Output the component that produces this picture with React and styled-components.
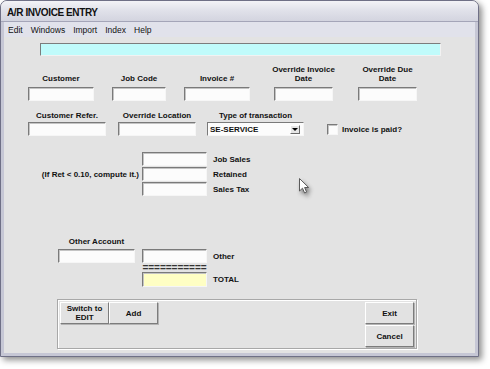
import React from "react";
import styled, { createGlobalStyle } from "styled-components";

const GlobalStyle = createGlobalStyle`
  html, body {
    margin: 0;
    padding: 0;
    background: #ffffff;
  }
  body {
    font-family: "Liberation Sans", Arial, sans-serif;
  }
`;

const Page = styled.div`
  width: 490px;
  height: 369px;
  overflow: hidden;
`;

const Window = styled.div`
  width: 479px;
  height: 357px;
  box-sizing: border-box;
  border: 1px solid #6f7086;
  border-radius: 7px 7px 0 0;
  box-shadow: 3px 3px 6px rgba(0, 0, 0, 0.45);
  display: flex;
  flex-direction: column;
  background: #e3e3e3;
  overflow: hidden;
`;

const TitleBar = styled.div`
  height: 21px;
  border-bottom: 1px solid #a4a5b8;
  background: linear-gradient(#f3f3f7 0%, #e1e2ea 45%, #d3d4df 100%);
  display: flex;
  align-items: center;
  padding: 2px 0 0 6px;
  box-sizing: border-box;
  font-size: 10px;
  font-weight: bold;
  letter-spacing: -0.4px;
  color: #111;
`;

const MenuBar = styled.div`
  height: 15px;
  background: #e1e2eb;
  border-left: 3px solid #c6c7d5;
  border-right: 3px solid #c6c7d5;
  display: flex;
  align-items: center;
  gap: 8px;
  padding-left: 4px;
  font-size: 8.5px;
  color: #111;
`;

const Body = styled.div`
  flex: 1;
  position: relative;
  border: 3px solid #c6c7d5;
  border-top: none;
  background: #e3e3e3;
`;

const CyanBar = styled.div`
  margin: 6px 0 0 36px;
  width: 401px;
  height: 13px;
  box-sizing: border-box;
  background: #c0fbfb;
  border: 1px solid;
  border-color: #7c7c7c #f2f2f2 #f2f2f2 #7c7c7c;
`;

const FieldRow = styled.div`
  display: flex;
  align-items: flex-end;
  margin-top: ${(p) => p.$top}px;
  padding-left: 24px;
`;

const Field = styled.div`
  width: ${(p) => p.$w}px;
  display: flex;
  flex-direction: column;
  align-items: center;
  gap: ${(p) => p.$gap || 4}px;
  margin-left: ${(p) => p.$left || 0}px;
`;

const Label = styled.div`
  font-size: 8px;
  font-weight: bold;
  line-height: 9px;
  color: #111;
  text-align: center;
  white-space: nowrap;
`;

const TextBox = styled.div`
  width: ${(p) => p.$w}px;
  height: ${(p) => p.$h || 14}px;
  flex-shrink: 0;
  box-sizing: border-box;
  background: ${(p) => (p.$yellow ? "#ffffc4" : "#fcfcfc")};
  border: 1px solid;
  border-color: #7a7a7a #f6f6f6 #f6f6f6 #7a7a7a;
  box-shadow: inset 1px 1px 0 #c4c4c4;
`;

const Select = styled.div`
  width: 97px;
  height: 14px;
  box-sizing: border-box;
  background: #fcfcfc;
  border: 1px solid;
  border-color: #7a7a7a #f6f6f6 #f6f6f6 #7a7a7a;
  display: flex;
  align-items: center;
  justify-content: space-between;
  padding: 0 3px 0 2px;
  font-size: 8px;
  font-weight: bold;
  color: #111;
`;

const DropButton = styled.div`
  width: 10px;
  height: 9px;
  box-sizing: border-box;
  background: #e6e6e6;
  border: 1px solid;
  border-color: #ffffff #6a6a6a #6a6a6a #ffffff;
  display: flex;
  align-items: center;
  justify-content: center;

  &::after {
    content: "";
    border-left: 3px solid transparent;
    border-right: 3px solid transparent;
    border-top: 3px solid #000;
  }
`;

const CheckGroup = styled.div`
  height: 14px;
  margin-left: 23px;
  display: flex;
  align-items: center;
  gap: 4px;
`;

const CheckBox = styled.div`
  width: 11px;
  height: 11px;
  box-sizing: border-box;
  background: #fcfcfc;
  border: 1px solid;
  border-color: #7a7a7a #f6f6f6 #f6f6f6 #7a7a7a;
  box-shadow: inset 1px 1px 0 #c4c4c4;
`;

const AmountGrid = styled.div`
  display: grid;
  grid-template-columns: 135px 65px auto;
  grid-template-rows: ${(p) => p.$rows};
  column-gap: 3px;
  row-gap: ${(p) => p.$rowGap || 0}px;
  margin-top: ${(p) => p.$top}px;
  align-items: center;
`;

const Note = styled(Label)`
  grid-column: 1;
  grid-row: ${(p) => p.$row};
  justify-self: end;
`;

const SideLabel = styled(Label)`
  grid-column: 3;
  grid-row: ${(p) => p.$row};
  padding-left: 3px;
  text-align: left;
`;

const Cell = styled.div`
  grid-column: ${(p) => p.$col};
  grid-row: ${(p) => p.$row};
  justify-self: ${(p) => p.$justify || "stretch"};
  margin-right: ${(p) => p.$right || 0}px;
  align-self: ${(p) => p.$align || "stretch"};
`;

const Equals = styled.div`
  font-size: 10px;
  font-weight: bold;
  line-height: 9px;
  color: #333;
  text-align: center;
  overflow: hidden;
  white-space: nowrap;
`;

const Panel = styled.div`
  margin: 12px 0 0 53px;
  width: 360px;
  height: 50px;
  box-sizing: border-box;
  border: 1px solid #a8a8a8;
  box-shadow: 1px 1px 0 #ffffff, inset 1px 1px 0 #ffffff;
  padding: 2px;
  display: flex;
  justify-content: space-between;
  align-items: flex-start;
`;

const ButtonGroup = styled.div`
  display: flex;
  flex-direction: ${(p) => (p.$column ? "column" : "row")};
  gap: ${(p) => (p.$column ? 1 : 0)}px;
`;

const Button = styled.div`
  width: 49px;
  height: 22px;
  box-sizing: border-box;
  background: #e2e2e2;
  border: 1px solid;
  border-color: #ffffff #7c7c7c #7c7c7c #ffffff;
  box-shadow: 1px 1px 0 #b4b4b4;
  display: flex;
  align-items: center;
  justify-content: center;
  text-align: center;
  font-size: 8px;
  font-weight: bold;
  line-height: 9px;
  color: #111;
`;

const Pointer = styled.svg`
  position: absolute;
  left: 295px;
  top: 141px;
  filter: drop-shadow(2px 3px 2px rgba(0, 0, 0, 0.45));
`;

const menuItems = ["Edit", "Windows", "Import", "Index", "Help"];

export default function App() {
  return (
    <Page>
      <GlobalStyle />
      <Window>
        <TitleBar>A/R INVOICE ENTRY</TitleBar>
        <MenuBar>
          {menuItems.map((m) => (
            <span key={m}>{m}</span>
          ))}
        </MenuBar>
        <Body>
          <CyanBar />

          <FieldRow $top={9}>
            <Field $w={66}>
              <Label>Customer</Label>
              <TextBox $w={66} />
            </Field>
            <Field $w={54} $left={18}>
              <Label>Job Code</Label>
              <TextBox $w={54} />
            </Field>
            <Field $w={66} $left={18}>
              <Label>Invoice #</Label>
              <TextBox $w={66} />
            </Field>
            <Field $w={59} $left={24}>
              <Label>
                Override Invoice
                <br />
                Date
              </Label>
              <TextBox $w={59} />
            </Field>
            <Field $w={59} $left={25}>
              <Label>
                Override Due
                <br />
                Date
              </Label>
              <TextBox $w={59} />
            </Field>
          </FieldRow>

          <FieldRow $top={10}>
            <Field $w={78} $gap={2}>
              <Label>Customer Refer.</Label>
              <TextBox $w={78} />
            </Field>
            <Field $w={78} $gap={2} $left={12}>
              <Label>Override Location</Label>
              <TextBox $w={78} />
            </Field>
            <Field $w={97} $gap={2} $left={11}>
              <Label>Type of transaction</Label>
              <Select>
                SE-SERVICE
                <DropButton />
              </Select>
            </Field>
            <CheckGroup>
              <CheckBox />
              <Label>Invoice is paid?</Label>
            </CheckGroup>
          </FieldRow>

          <AmountGrid $top={16} $rows="14px 14px 14px" $rowGap={1}>
            <Cell $col={2} $row={1}>
              <TextBox $w={65} />
            </Cell>
            <SideLabel $row={1}>Job Sales</SideLabel>
            <Note $row={2}>(If Ret &lt; 0.10, compute it.)</Note>
            <Cell $col={2} $row={2}>
              <TextBox $w={65} />
            </Cell>
            <SideLabel $row={2}>Retained</SideLabel>
            <Cell $col={2} $row={3}>
              <TextBox $w={65} />
            </Cell>
            <SideLabel $row={3}>Sales Tax</SideLabel>
          </AmountGrid>

          <AmountGrid $top={41} $rows="12px 14px 9px 15px">
            <Cell $col={1} $row={1} $justify="end" $right={4} $align="start">
              <Label style={{ width: 77 }}>Other Account</Label>
            </Cell>
            <Cell $col={1} $row={2} $justify="end" $right={4}>
              <TextBox $w={77} />
            </Cell>
            <Cell $col={2} $row={2}>
              <TextBox $w={65} />
            </Cell>
            <SideLabel $row={2}>Other</SideLabel>
            <Cell $col={2} $row={3}>
              <Equals>===========</Equals>
            </Cell>
            <Cell $col={2} $row={4}>
              <TextBox $w={65} $h={15} $yellow />
            </Cell>
            <SideLabel $row={4}>TOTAL</SideLabel>
          </AmountGrid>

          <Panel>
            <ButtonGroup>
              <Button>
                Switch to
                <br />
                EDIT
              </Button>
              <Button>Add</Button>
            </ButtonGroup>
            <ButtonGroup $column>
              <Button>Exit</Button>
              <Button>Cancel</Button>
            </ButtonGroup>
          </Panel>

          <Pointer width="12" height="17" viewBox="0 0 12 17">
            <path
              d="M0.5 0.5 L0.5 13 L3.5 10.2 L5.6 15 L7.6 14.1 L5.6 9.5 L9.6 9.5 Z"
              fill="#ffffff"
              stroke="#5a5a5a"
              strokeWidth="1"
              strokeLinejoin="round"
            />
          </Pointer>
        </Body>
      </Window>
    </Page>
  );
}
